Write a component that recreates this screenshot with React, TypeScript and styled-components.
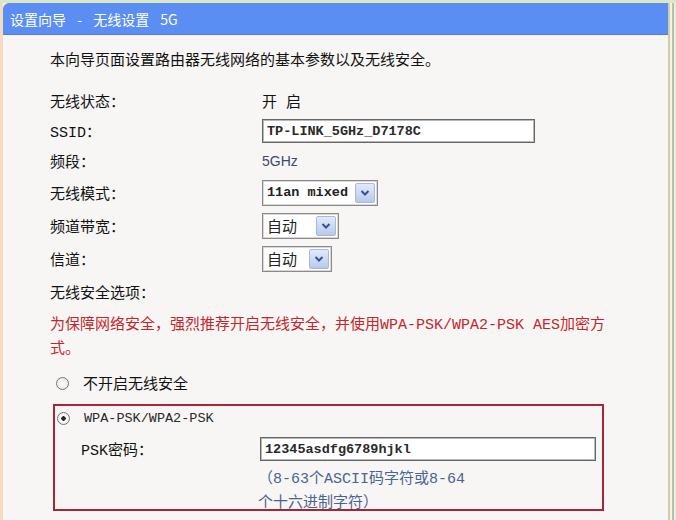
import styled, { createGlobalStyle } from "styled-components";

const GlobalStyle = createGlobalStyle`
  html, body {
    margin: 0;
    padding: 0;
    background: #dbe8c8;
  }
`;

const MIX = `"Liberation Mono", "Noto Sans CJK SC", monospace`;

const Page = styled.div`
  width: 676px;
  height: 520px;
  overflow: hidden;
  box-sizing: border-box;
  padding-top: 3px;
  background: #dbe8c8;
  display: flex;
`;

const Frame = styled.div`
  width: 670px;
  box-sizing: border-box;
  border-left: 3px solid #f3dcc0;
  border-right: 2px solid #d4cca4;
  box-shadow: 2px 0 0 #f3f3ea, 4px 0 0 #b9c1a1, 6px 0 0 #e8eee0;
  background: #f7f6f5;
  display: flex;
  flex-direction: column;
`;

const TitleBar = styled.div`
  height: 31px;
  background: #5b8ef3;
  border-top-left-radius: 6px;
  border-bottom: 1px solid #4f7fe0;
  box-shadow: 0 1px 0 #fbeff0;
  color: #ffffff;
  font-family: "Noto Sans CJK SC", sans-serif;
  font-size: 14px;
  word-spacing: 8px;
  display: flex;
  align-items: center;
  padding-left: 7px;
  white-space: pre;
`;

const Content = styled.div`
  padding: 17px 0 0 47px;
  font-family: ${MIX};
  font-size: 15px;
  color: #121212;
`;

const Intro = styled.div`
  height: 20px;
  line-height: 20px;
  margin-bottom: 14px;
`;

const FormRow = styled.div<{ $h: number }>`
  display: grid;
  grid-template-columns: 212px 1fr;
  align-items: center;
  height: ${(p) => p.$h}px;
`;

const Label = styled.div`
  white-space: nowrap;
`;

const Value = styled.div`
  display: flex;
  align-items: center;
`;

const Band = styled.span`
  font-family: "Liberation Sans", sans-serif;
  font-size: 14px;
  color: #3c4a6c;
`;

const TextInput = styled.div<{ $w: number }>`
  width: ${(p) => p.$w}px;
  height: 24px;
  box-sizing: border-box;
  border: 1px solid #666;
  box-shadow: inset 0 0 0 1px #b8b8b8;
  background: #fff;
  font-family: "Liberation Mono", monospace;
  font-weight: bold;
  font-size: 13.5px;
  color: #2a2a2a;
  display: flex;
  align-items: center;
  padding-left: 4px;
  white-space: nowrap;
`;

const SelectBox = styled.div<{ $w: number }>`
  width: ${(p) => p.$w}px;
  height: 26px;
  box-sizing: border-box;
  border: 1px solid #8a8a8a;
  box-shadow: inset 0 0 0 1px #d8d8d8;
  background: #fff;
  display: flex;
  align-items: center;
  justify-content: space-between;
  padding: 0 2px 0 4px;
`;

const SelectText = styled.span<{ $mono?: boolean }>`
  font-family: ${(p) => (p.$mono ? `"Liberation Mono", monospace` : MIX)};
  font-weight: ${(p) => (p.$mono ? "bold" : "normal")};
  font-size: ${(p) => (p.$mono ? "13.5px" : "15px")};
  color: #222;
  white-space: nowrap;
`;

const ArrowBtn = styled.div`
  width: 20px;
  height: 20px;
  box-sizing: border-box;
  border: 1px solid #a9b9da;
  border-radius: 2px;
  background: linear-gradient(#e2eafa, #b7c9ec);
  display: flex;
  align-items: center;
  justify-content: center;
`;

const Select = ({ w, text, mono }: { w: number; text: string; mono?: boolean }) => (
  <SelectBox $w={w}>
    <SelectText $mono={mono}>{text}</SelectText>
    <ArrowBtn>
      <svg width="10" height="8" viewBox="0 0 10 8">
        <path d="M1.5 2 L5 5.5 L8.5 2" fill="none" stroke="#34548f" strokeWidth="2" />
      </svg>
    </ArrowBtn>
  </SelectBox>
);

const SectionLabel = styled.div`
  height: 38px;
  line-height: 38px;
`;

const Warning = styled.div`
  color: #c3272b;
  line-height: 24px;
  white-space: nowrap;
`;

const RadioRow = styled.div<{ $h: number; $indent: number }>`
  height: ${(p) => p.$h}px;
  display: flex;
  align-items: center;
  gap: 14px;
  padding-left: ${(p) => p.$indent}px;
`;

const RadioDot = styled.span<{ $on?: boolean }>`
  width: 13px;
  height: 13px;
  box-sizing: border-box;
  border-radius: 50%;
  border: 1px solid #777;
  background: radial-gradient(circle, ${(p) => (p.$on ? "#2a2a2a 0 2px, #fff 2.5px" : "#fff 0")}, #e0e0e0 100%);
  flex: none;
`;

const SmallMono = styled.span`
  font-family: "Liberation Mono", monospace;
  font-size: 13.5px;
  color: #2a2a2a;
`;

const SecurityBox = styled.div`
  margin-left: 3px;
  width: 551px;
  height: 107px;
  box-sizing: border-box;
  border: 2px solid #a5253a;
`;

const BoxRow = styled.div<{ $h: number }>`
  display: grid;
  grid-template-columns: 179px 1fr;
  align-items: center;
  height: ${(p) => p.$h}px;
  padding-left: 26px;
`;

const Hint = styled.div`
  color: #4a6490;
  line-height: 24px;
  white-space: nowrap;
  padding-left: 203px;
`;

export default function App() {
  return (
    <Page>
      <GlobalStyle />
      <Frame>
        <TitleBar>{"设置向导 - 无线设置 5G"}</TitleBar>
        <Content>
          <Intro>本向导页面设置路由器无线网络的基本参数以及无线安全。</Intro>
          <FormRow $h={30}>
            <Label>无线状态：</Label>
            <Value>开 启</Value>
          </FormRow>
          <FormRow $h={30}>
            <Label>SSID：</Label>
            <Value>
              <TextInput $w={273}>TP-LINK_5GHz_D7178C</TextInput>
            </Value>
          </FormRow>
          <FormRow $h={30}>
            <Label>频段：</Label>
            <Value>
              <Band>5GHz</Band>
            </Value>
          </FormRow>
          <FormRow $h={33}>
            <Label>无线模式：</Label>
            <Value>
              <Select w={116} text="11an mixed" mono />
            </Value>
          </FormRow>
          <FormRow $h={33}>
            <Label>频道带宽：</Label>
            <Value>
              <Select w={77} text="自动" />
            </Value>
          </FormRow>
          <FormRow $h={34}>
            <Label>信道：</Label>
            <Value>
              <Select w={70} text="自动" />
            </Value>
          </FormRow>
          <SectionLabel>无线安全选项：</SectionLabel>
          <Warning>为保障网络安全，强烈推荐开启无线安全，并使用WPA-PSK/WPA2-PSK AES加密方</Warning>
          <Warning>式。</Warning>
          <RadioRow $h={42} $indent={6}>
            <RadioDot />
            <span>不开启无线安全</span>
          </RadioRow>
          <SecurityBox>
            <RadioRow $h={24} $indent={2}>
              <RadioDot $on />
              <SmallMono>WPA-PSK/WPA2-PSK</SmallMono>
            </RadioRow>
            <BoxRow $h={38}>
              <Label>PSK密码：</Label>
              <TextInput $w={336}>12345asdfg6789hjkl</TextInput>
            </BoxRow>
            <Hint>（8-63个ASCII码字符或8-64</Hint>
            <Hint>个十六进制字符）</Hint>
          </SecurityBox>
        </Content>
      </Frame>
    </Page>
  );
}
